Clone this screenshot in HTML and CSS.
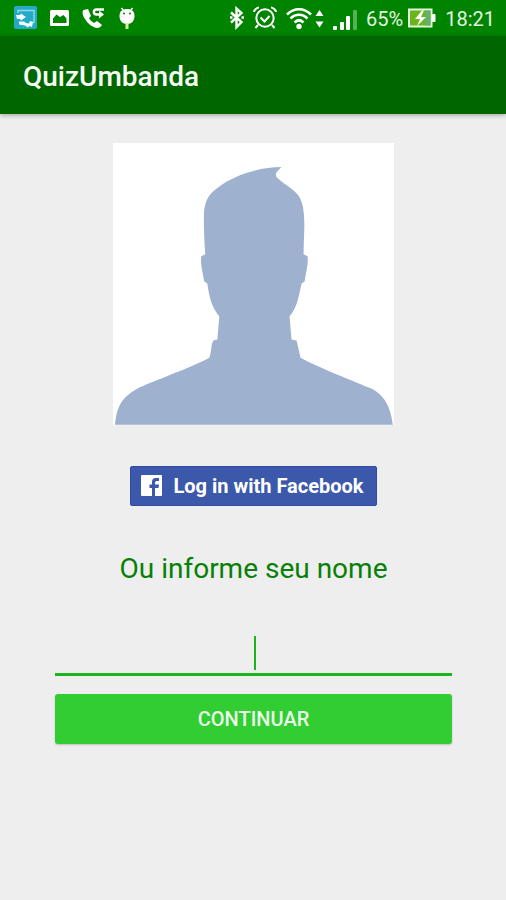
FILE: index.html
```html
<!DOCTYPE html>
<html lang="pt-BR">
<head>
<meta charset="utf-8">
<meta name="viewport" content="width=device-width, initial-scale=1">
<title>QuizUmbanda</title>
<link rel="stylesheet" href="styles.css">
</head>
<body>
<div class="status">
  <div class="status-group status-left">
    <svg width="24" height="24" viewBox="14 6 24 24" aria-hidden="true">
      <rect x="14" y="6" width="23" height="23" rx="2" fill="#25a9c6"/>
      <path d="M18 13V10.500h16v12h-2" fill="none" stroke="#8bdcea" stroke-width="1.400"/>
      <path d="M16 15h4l1-1.500 5 3.500-5 3.500-1-1.500h-3zM19 21.500h5l2 1.500 3 .5 1-2.500 3 1-1 5-3-1-1 1.500-3-2-6-1z" fill="#eefbfd"/>
    </svg>
    <svg width="20" height="24" viewBox="50 6 20 24" aria-hidden="true">
      <rect x="50" y="10" width="19" height="16" rx="1.500" fill="#fff"/>
      <path d="M53 23V18.500L56.500 14.500 60 17 63.500 15 66.500 18.500V23Z" fill="#008400"/>
    </svg>
    <svg width="25" height="24" viewBox="82 6 25 24" aria-hidden="true">
      <path d="M83.500 10c-2 2-.5 6 1.500 9 3 5 8 8.500 12 9 2 0 4-1 5-3l-5-4-3 2c-2-1-4-3-5-5l2-2-3-7z" fill="#fff"/>
      <path d="M104 9.500h-7.500c-3.500 0-3.500 5 0 5h3" fill="none" stroke="#fff" stroke-width="2.400"/>
      <path d="M99 10.500l5 4-5 4z" fill="#fff"/>
    </svg>
    <svg width="16" height="24" viewBox="119 6 16 24" fill="#fff" aria-hidden="true">
      <path d="M121.500 8l3 4M132.500 8l-3 4" stroke="#fff" stroke-width="1.500"/>
      <path d="M119.500 16c0-5 3-7 7.500-7s7.500 2 7.500 7-3 8-7.500 8-7.500-3-7.500-8z"/>
      <path d="M125.500 23h3v6h-3z" fill="#d9f2a7"/>
      <circle cx="124" cy="13.500" r="1" fill="#008600"/><circle cx="130" cy="13.500" r="1" fill="#008600"/>
    </svg>
  </div>
  <div class="status-group status-right">
    <svg width="14" height="24" viewBox="230 6 14 24" fill="none" stroke="#fff" stroke-width="2.400" aria-hidden="true">
      <path d="M231 12.500l10.500 9.500-5 5V8.500l5 4.500-10.500 9.500"/>
      <path d="M230 17.500h2.500M241.500 17.500h2.500" stroke-width="2.500"/>
    </svg>
    <svg width="24" height="24" viewBox="255 6 24 24" fill="none" stroke="#fff" stroke-width="2" aria-hidden="true">
      <circle cx="267" cy="18" r="8.700"/>
      <path d="M262.500 17.500l4 4 5-5.500M256 12c0-2 3-4.500 5-4.500M273 7.500c2 0 5 2.500 5 4.500M260 25l-2.500 3M274 25l2.500 3"/>
    </svg>
    <svg width="38" height="24" viewBox="287 6 38 24" fill="none" stroke="#fff" stroke-width="2.600" aria-hidden="true">
      <path d="M288 14.500c7-7 17-7 24 0M291.500 18.500c5-5 12-5 17 0M295.500 22.500c3-3 6-3 9 0"/>
      <circle cx="300" cy="26.500" r="2.700" fill="#fff" stroke="none"/>
      <path d="M320.500 10l4 6h-8zM320.500 27.500l4-6h-8z" fill="#fff" stroke="none"/>
    </svg>
    <svg width="24" height="24" viewBox="333 6 24 24" fill="#fff" aria-hidden="true">
      <rect x="333" y="26" width="4" height="4" rx="1"/><rect x="340" y="22" width="4" height="8" rx="1"/><rect x="346" y="16" width="4" height="14" rx="1"/>
      <rect x="353" y="10" width="4" height="20" rx="1" opacity=".35"/>
    </svg>
    <div class="power">
      <span class="percent">65%</span>
      <svg width="28" height="24" viewBox="407 6 28 24" aria-hidden="true">
        <rect x="408" y="9.500" width="22.500" height="17" fill="#69b51b" stroke="#e6f5dc" stroke-width="2"/>
        <rect x="424" y="10.500" width="5.500" height="15" fill="#60b16a"/>
        <rect x="431" y="14" width="3.500" height="8" rx="1" fill="#fff"/>
        <path d="M421 10.500l-7 8.500h5l-3 7 9-9h-5l3-6.500z" fill="#fff"/>
      </svg>
    </div>
    <time class="clock">18:21</time>
  </div>
</div>
<header class="appbar"><h1>QuizUmbanda</h1></header>
<main class="content">
  <svg class="avatar" viewBox="0 0 281 281" role="img" aria-label="Foto de perfil">
    <rect width="281" height="281" fill="#fff"/>
    <path fill="#9eb1ce" d="M2 281C4 263 8 254 24 245C35 239 78 224 96 214C99 206 97 203 100 197L104 196L106 173C98 163 96 153 94 140L91 138C89 127 87 120 88 113L92 111C91 97 90 75 91 66C93 54 97 50 105 44C121 32 146 24 168 24C164 28 160 31 164 35C171 42 183 47 187 56C193 70 190 91 190 111L194 113C195 121 192 130 191 138L188 140C185 153 184 163 176 173L178 196L183 197L187 214C203 223 244 239 258 245C273 253 277 266 279 281Z"/>
  </svg>
  <button class="facebook" type="button">
    <svg width="21" height="21" viewBox="0 0 21 21" aria-hidden="true">
      <rect width="21" height="21" rx="1" fill="#fff"/>
      <path d="M14 21V13H17.500L18 9.500H14V7.500Q14 6 15.500 6H18V3H15Q11 3 11 7V9.500H8.500V13H11V21Z" fill="#3c58ab"/>
    </svg>
    <span>Log in with Facebook</span>
  </button>
  <form class="form">
    <label for="nome">Ou informe seu nome</label>
    <div class="field"><input id="nome" type="text" autocomplete="off"></div>
    <button class="continue" type="button">CONTINUAR</button>
  </form>
</main>
</body>
</html>
```
FILE: styles.css
```css
* {
  box-sizing: border-box;
}

body {
  margin: 0;
  min-height: 100vh;
  background: #eeeeee;
  font-family: Roboto, "Liberation Sans", sans-serif;
}

button,
input {
  font-family: inherit;
}

.status {
  display: flex;
  justify-content: space-between;
  height: 36px;
  padding: 0 11px 0 14px;
  background: #008400;
  color: #e4f5e2;
  font-size: 20px;
}

.status-group,
.power {
  display: flex;
  align-items: center;
}

.status-left {
  gap: 12px;
}

.status-right {
  gap: 9px;
}

.power {
  gap: 5px;
}

.status svg {
  flex: none;
}

.percent,
.clock {
  line-height: 36px;
  padding-top: 2px;
}

.appbar {
  display: flex;
  align-items: center;
  height: 78px;
  padding: 2px 23px 0;
  background: #006600;
  box-shadow: 0 1px 5px rgba(0, 0, 0, 0.35);
}

.appbar h1 {
  margin: 0;
  color: #f4faf2;
  font-size: 28px;
  font-weight: 500;
}

.content {
  display: flex;
  flex-direction: column;
  align-items: center;
  padding: 29px 54px 40px 55px;
}

.avatar {
  display: block;
  width: 71%;
  max-width: 320px;
}

.facebook {
  display: flex;
  align-items: center;
  gap: 12px;
  height: 40px;
  margin-top: 41px;
  padding: 0 13px 0 10px;
  border: 1px solid #2c4ba3;
  border-radius: 2px;
  background: #3c58ab;
  color: #fff;
  font-size: 20px;
  font-weight: 700;
}

.form {
  display: flex;
  flex-direction: column;
  width: 100%;
}

.form label {
  margin-top: 46px;
  color: #078007;
  font-size: 28px;
  line-height: 34px;
  text-align: center;
}

.field {
  position: relative;
  margin-top: 40px;
}

.field::after {
  content: "";
  position: absolute;
  top: 10px;
  left: 50%;
  width: 2px;
  height: 34px;
  background: #1ab51c;
}

.field input {
  display: block;
  width: 100%;
  height: 50px;
  padding: 0;
  border: 0;
  border-bottom: 3px solid #1ab51c;
  outline: 0;
  background: transparent;
  color: #078007;
  font-size: 28px;
  text-align: center;
  caret-color: transparent;
}

.continue {
  height: 50px;
  margin-top: 18px;
  border: 0;
  border-radius: 3px;
  background: #32cd32;
  box-shadow: 0 1px 2px rgba(0, 0, 0, 0.2);
  color: #e9fbe9;
  font-size: 20px;
  font-weight: 500;
}
```
